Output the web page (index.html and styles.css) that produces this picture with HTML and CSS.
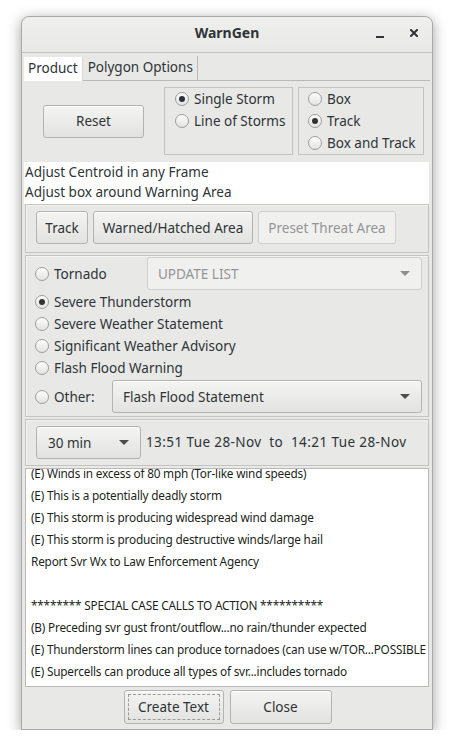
FILE: index.html
```html
<!DOCTYPE html>
<html>
<head>
<meta charset="utf-8">
<title>WarnGen</title>
<link rel="stylesheet" href="styles.css">
</head>
<body>
<div class="window">
  <div class="titlebar">
    <span class="title">WarnGen</span>
    <span class="ctrl min"></span>
    <span class="ctrl close">
      <svg width="8" height="8" viewBox="0 0 8 8"><path d="M1 1 L7 7 M7 1 L1 7" stroke="#2e3436" stroke-width="2" stroke-linecap="square"/></svg>
    </span>
  </div>
  <div class="content">
    <div class="tabs">
      <div class="tab active">Product</div>
      <div class="tab">Polygon Options</div>
    </div>
    <div class="row1">
      <div class="reset-cell"><button class="btn reset">Reset</button></div>
      <div class="group storm">
        <div class="radio on"><span class="dot"></span>Single Storm</div>
        <div class="radio"><span class="dot"></span>Line of Storms</div>
      </div>
      <div class="group mode">
        <div class="radio"><span class="dot"></span>Box</div>
        <div class="radio on"><span class="dot"></span>Track</div>
        <div class="radio"><span class="dot"></span>Box and Track</div>
      </div>
    </div>
    <div class="hints">
      <div>Adjust Centroid in any Frame</div>
      <div>Adjust box around Warning Area</div>
    </div>
    <div class="panel btnrow">
      <button class="btn b-track">Track</button>
      <button class="btn b-warned">Warned/Hatched Area</button>
      <button class="btn b-preset disabled">Preset Threat Area</button>
    </div>
    <div class="panel products">
      <div class="prow first">
        <div class="radio w-tor"><span class="dot"></span>Tornado</div>
        <div class="combo disabled"><span>UPDATE LIST</span><span class="arrow"></span></div>
      </div>
      <div class="radio on"><span class="dot"></span>Severe Thunderstorm</div>
      <div class="radio"><span class="dot"></span>Severe Weather Statement</div>
      <div class="radio"><span class="dot"></span>Significant Weather Advisory</div>
      <div class="radio"><span class="dot"></span>Flash Flood Warning</div>
      <div class="prow other">
        <div class="radio w-other"><span class="dot"></span>Other:</div>
        <div class="combo"><span>Flash Flood Statement</span><span class="arrow"></span></div>
      </div>
    </div>
    <div class="panel timerow">
      <div class="combo dur"><span>30 min</span><span class="arrow"></span></div>
      <span class="times">13:51 Tue 28-Nov&nbsp; to&nbsp; 14:21 Tue 28-Nov</span>
    </div>
    <div class="list">
      <div class="list-inner">
        <div>(E) Winds in excess of 80 mph (Tor-like wind speeds)</div>
        <div>(E) This is a potentially deadly storm</div>
        <div>(E) This storm is producing widespread wind damage</div>
        <div>(E) This storm is producing destructive winds/large hail</div>
        <div>Report Svr Wx to Law Enforcement Agency</div>
        <div>&nbsp;</div>
        <div>******** SPECIAL CASE CALLS TO ACTION **********</div>
        <div>(B) Preceding svr gust front/outflow...no rain/thunder expected</div>
        <div>(E) Thunderstorm lines can produce tornadoes (can use w/TOR...POSSIBLE tag)</div>
        <div>(E) Supercells can produce all types of svr...includes tornado</div>
      </div>
    </div>
    <div class="bottom">
      <button class="btn b-create focus"><span class="focus-ring">Create Text</span></button>
      <button class="btn b-close">Close</button>
    </div>
  </div>
</div>
</body>
</html>
```
FILE: styles.css
```css
* { box-sizing: border-box; }
html, body { margin: 0; padding: 0; background: #ffffff; }
body {
  font-family: "Noto Sans", "DejaVu Sans", sans-serif;
  font-size: 13.5px;
  color: #2e3436;
}
.window {
  margin: 16px 0 0 21px;
  width: 412px;
  height: 714px;
  background: #e8e8e7;
  border: 1px solid #a9a9a7;
  border-radius: 8px 8px 0 0;
  box-shadow: 0 3px 14px rgba(0,0,0,0.38);
  display: flex;
  flex-direction: column;
}
.titlebar {
  height: 36px;
  flex: none;
  position: relative;
  display: flex;
  align-items: center;
  justify-content: center;
  padding-bottom: 4px;
  border-bottom: 1px solid #c2c2c0;
  background: linear-gradient(#efefee, #e8e8e7);
  border-radius: 8px 8px 0 0;
}
.title { font-weight: bold; font-size: 14px; color: #2e3436; }
.ctrl { position: absolute; }
.min { left: 354px; top: 19px; width: 8px; height: 2px; background: #2e3436; }
.close { left: 388px; top: 12px; width: 8px; height: 8px; display: flex; }
.content {
  flex: 1;
  display: flex;
  flex-direction: column;
  padding: 3px 2px 0 2px;
}
.tabs {
  display: flex;
  height: 25px;
  border-bottom: 1px solid #b9b9b7;
}
.tab {
  padding: 0 4px 0 5px;
  line-height: 23px;
  height: 24px;
  border-right: 1px solid #b9b9b7;
}
.tab.active {
  background: #ffffff;
  margin-top: 1px;
  padding: 0 4px;
  border-right: 1px solid #d8d8d6;
}
.row1 {
  display: flex;
  height: 81px;
  padding-top: 6px;
  align-items: flex-start;
}
.reset-cell {
  width: 140px;
  height: 68px;
  display: flex;
  align-items: center;
  justify-content: flex-end;
  padding-right: 20px;
}
.btn {
  font-family: inherit;
  font-size: 13.5px;
  color: #2e3436;
  height: 33px;
  padding: 0;
  border: 1px solid #b3b3b1;
  border-radius: 3px;
  background: linear-gradient(#f4f4f3, #e2e2e0);
  box-shadow: inset 0 1px 0 #ffffff;
}
.btn.disabled {
  color: #939596;
  background: #f0f0ef;
  border-color: #cfcfcd;
  box-shadow: none;
}
.reset { width: 101px; }
.group {
  height: 68px;
  border: 1px solid #c3c3c1;
  padding: 0 0 0 10px;
}
.storm { width: 129px; }
.mode { width: 126px; margin-left: 5px; padding-left: 9px; }
.radio {
  display: flex;
  align-items: center;
  height: 22px;
  white-space: nowrap;
}
.dot {
  width: 14px;
  height: 14px;
  border-radius: 50%;
  border: 1px solid #9d9d9b;
  background: linear-gradient(#fdfdfd, #e3e3e2);
  margin-right: 5px;
  flex: none;
  display: flex;
  align-items: center;
  justify-content: center;
}
.radio.on .dot::after {
  content: "";
  width: 6px;
  height: 6px;
  border-radius: 50%;
  background: #2e3436;
}
.hints {
  background: #ffffff;
  height: 42px;
  padding: 0 0 0 1px;
  margin: 0 1px 0 0;
  line-height: 20px;
}
.panel {
  border: 1px solid #c3c3c1;
  box-shadow: inset 1px 1px 0 #f3f3f2;
  margin: 0 1px;
}
.btnrow {
  height: 49px;
  display: flex;
  align-items: flex-start;
  gap: 5px;
  padding: 6px 0 0 10px;
}
.b-track { width: 52px; }
.b-warned { width: 160px; }
.b-preset { width: 138px; }
.products {
  margin-top: 2px;
  height: 162px;
  padding: 1px 6px 0 9px;
}
.prow { display: flex; align-items: center; }
.prow.first { height: 34px; }
.prow.other { height: 33px; margin-top: 1px; }
.w-tor { width: 112px; }
.w-other { width: 77px; }
.combo {
  flex: 1;
  height: 33px;
  display: flex;
  align-items: center;
  justify-content: space-between;
  padding: 0 11px 0 10px;
  border: 1px solid #b3b3b1;
  border-radius: 3px;
  background: linear-gradient(#f4f4f3, #e2e2e0);
  box-shadow: inset 0 1px 0 #ffffff;
}
.prow.first .combo { align-self: flex-start; }
.combo.disabled {
  color: #939596;
  background: #f0f0ef;
  border-color: #cfcfcd;
  box-shadow: none;
}
.arrow {
  width: 0;
  height: 0;
  border-left: 5px solid transparent;
  border-right: 5px solid transparent;
  border-top: 5px solid #4a4d4e;
}
.combo.disabled .arrow { border-top-color: #8b8e8f; }
.timerow {
  margin-top: 2px;
  height: 47px;
  display: flex;
  align-items: flex-start;
  padding: 6px 0 0 10px;
}
.combo.dur {
  flex: none;
  width: 105px;
  padding: 0 11px 0 11px;
}
.times { margin-left: 5px; line-height: 33px; letter-spacing: 0.4px; }
.list {
  margin: 2px 1px 0 1px;
  height: 219px;
  background: #ffffff;
  border: 1px solid #b9b9b7;
  overflow: hidden;
  font-size: 11.8px;
  letter-spacing: -0.2px;
  color: #1c1f20;
}
.list-inner {
  margin-top: -7px;
  padding-left: 5px;
  white-space: nowrap;
}
.list-inner div { height: 22px; line-height: 22px; }
.bottom {
  display: flex;
  justify-content: center;
  gap: 6px;
  padding-top: 3px;
  padding-left: 1px;
}
.bottom .btn { height: 34px; }
.b-create { width: 100px; padding: 3px; }
.b-close { width: 102px; }
.focus-ring {
  display: flex;
  align-items: center;
  justify-content: center;
  height: 100%;
  border: 1px dashed #9a9a98;
}
```
